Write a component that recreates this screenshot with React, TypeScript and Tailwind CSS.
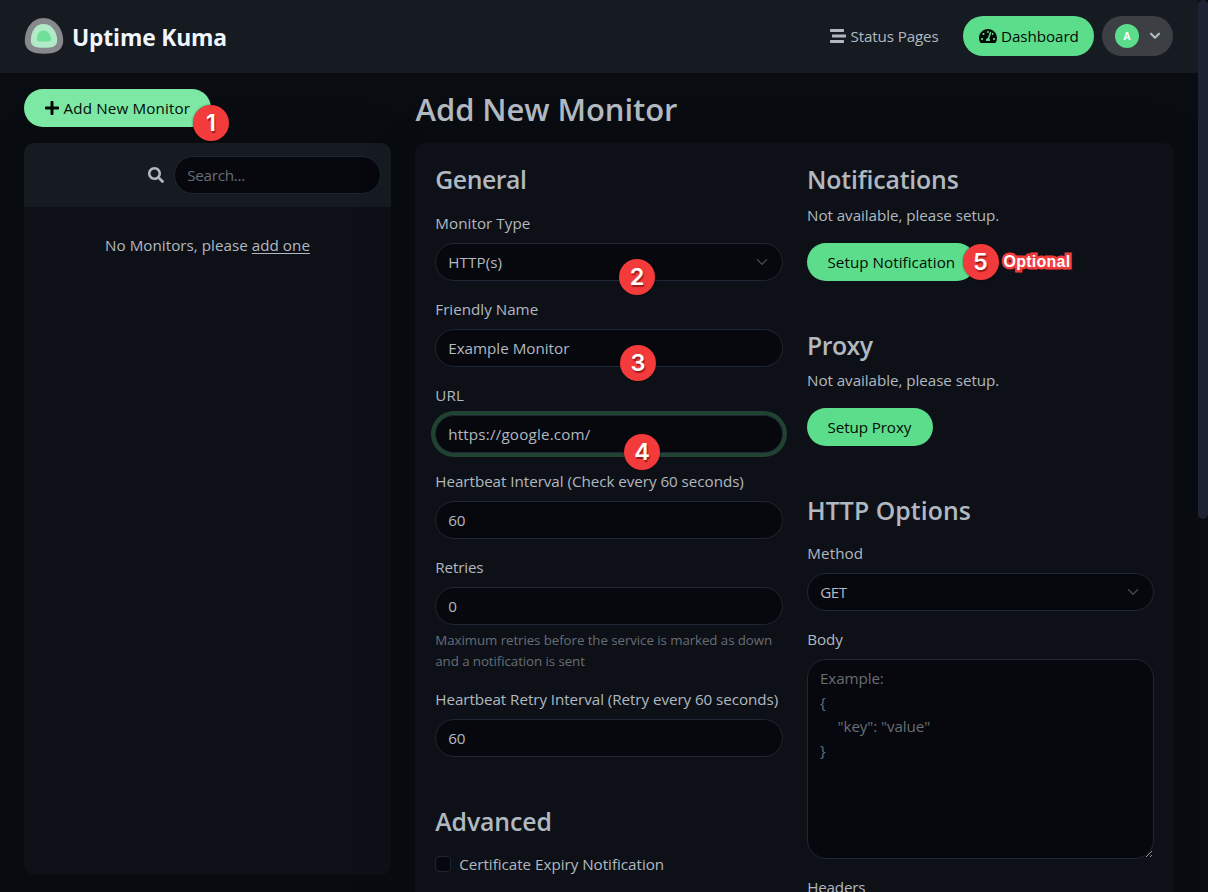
import React from "react";
import { FaPlus, FaSearch, FaStream, FaTachometerAlt } from "react-icons/fa";

const inputClass =
  "block h-[38px] w-full rounded-[19px] border border-[#1d2634] bg-[#07080d] pr-3 pl-[12.2px] text-[15.2px] text-[#b1b8c0] outline-none placeholder:text-[#676d75] placeholder:opacity-100";

function Logo() {
  return (
    <svg width="40" height="38" viewBox="0 0 40 38" className="block">
      <path d="M19.500 1C31 1 39.200 12 39.200 23.500C39.200 32.500 33 36.800 20 36.800C7 36.800 .8 32.500 .8 23.500C.8 12 8 1 19.500 1Z" fill="#86888b" />
      <path d="M19.500 7C27.500 7 33.200 14.500 33.200 23.500C33.200 29 29 30.800 20 30.800C11 30.800 6.800 29 6.800 23.500C6.800 14.500 11.500 7 19.500 7Z" fill="#b0eac6" />
      <path d="M19.500 13.500C24 13.500 26.500 17.500 27.200 22.500C27.300 24.100 26 24.500 20 24.500C14.500 24.500 12.700 24.300 12.800 22C13.300 17 15.500 13.500 19.500 13.500Z" fill="#6fe09a" />
    </svg>
  );
}

function Badge({ n, className }: { n: number; className: string }) {
  return (
    <span
      className={`absolute z-10 flex size-9 items-center justify-center rounded-full bg-[#f33b3b] font-['Inter','Liberation_Sans',sans-serif] text-[23.5px] leading-none font-semibold text-white shadow-[0_0_2px_rgba(0,0,0,0.6)] [text-shadow:1px_2px_1px_rgba(90,0,0,0.55)] ${className}`}
    >
      {n}
    </span>
  );
}

function Heading({ children, className = "" }: { children: React.ReactNode; className?: string }) {
  return <h2 className={`h-[31px] text-[24.8px] leading-[32px] font-semibold whitespace-nowrap ${className}`}>{children}</h2>;
}

function Label({ children, className = "" }: { children: React.ReactNode; className?: string }) {
  return <label className={`mb-2 block h-6 pl-[0.3px] leading-6 whitespace-nowrap ${className}`}>{children}</label>;
}

function Select({ value, className = "" }: { value: string; className?: string }) {
  return (
    <div className={`${inputClass} flex items-center justify-between`}>
      <span className={className}>{value}</span>
      <svg width="12" height="12" viewBox="0 0 16 16" fill="none" stroke="#41454c" strokeWidth="2" strokeLinecap="round" strokeLinejoin="round" className="mr-[2px] mb-px">
        <path d="m2 5 6 6 6-6" />
      </svg>
    </div>
  );
}

function Button({ children, className = "" }: { children: React.ReactNode; className?: string }) {
  return (
    <button className={`flex h-[38px] items-center rounded-[19px] bg-[#5cdd8b] pt-px whitespace-nowrap text-[#020b05] ${className}`}>
      {children}
    </button>
  );
}

export default function App() {
  return (
    <div className="relative flex h-[892px] w-[1208px] overflow-hidden bg-[#090c10] font-['Open_Sans','Noto_Sans',sans-serif] text-[15.2px] text-[#b1b8c0]">
      <div className="flex w-[1198px] flex-col">
        <header className="flex h-[73px] shrink-0 items-start bg-[#161b22]">
          <div className="mt-[17px] ml-6">
            <Logo />
          </div>
          <span className="mt-[19px] ml-2 text-[22.8px] leading-[38px] font-bold tracking-[-0.15px] text-[#f0f6fc]">Uptime Kuma</span>
          <div className="mt-4 mr-[25px] ml-auto flex h-10 items-center">
            <FaStream size={16} className="mr-[4.5px]" />
            <span className="w-[112.5px] tracking-[-0.13px]">Status Pages</span>
            <span className="flex h-10 w-[131px] items-center rounded-full bg-[#5cdd8b] pl-4 text-[#020b05]">
              <FaTachometerAlt size={18} className="mr-1" />
              <span className="tracking-[-0.07px]">Dashboard</span>
            </span>
            <span className="ml-2 flex h-10 w-[71px] items-center rounded-full bg-[#3c3f44] pl-[13px]">
              <span className="flex size-6 items-center justify-center rounded-full bg-[#5cdd8b] text-[10px] font-bold text-white">A</span>
              <svg width="12" height="8" viewBox="0 0 12 8" fill="none" stroke="#b1b8c0" strokeWidth="2.200" strokeLinecap="round" strokeLinejoin="round" className="ml-[10px]">
                <path d="M2 1.700 6 5.700 10 1.700" />
              </svg>
            </span>
          </div>
        </header>

        <div className="flex min-h-0 flex-1 pt-4 pl-6">
          <aside className="w-[367px] shrink-0">
            <div className="relative w-[187px]">
              <Button className="w-full bg-[#7ce8a4] pl-[19.5px]">
                <FaPlus size={16} className="mr-[4px] mb-px" />
                <span className="tracking-[0.14px]">Add New Monitor</span>
              </Button>
              <Badge n={1} className="top-[16px] left-[169px]" />
            </div>
            <div className="mt-4 h-[732px] overflow-hidden rounded-[10px] bg-[#0d1117] shadow-[0_15px_70px_rgba(0,0,0,0.1)]">
              <div className="flex h-16 items-center justify-end bg-[#161b22] pr-[10px]">
                <FaSearch size={16} className="mr-[10px]" />
                <input className={`${inputClass} !w-[207px] tracking-[-0.26px]`} placeholder="Search..." />
              </div>
              <p className="mt-[26px] text-center leading-6 tracking-[0.03px]">
                No Monitors, please <a className="underline underline-offset-2">add one</a>
              </p>
            </div>
          </aside>

          <main className="ml-6 w-[759px]">
            <h1 className="h-[38px] pl-[0.5px] text-[31px] leading-[40px] font-semibold tracking-[-0.08px]">Add New Monitor</h1>
            <div className="mt-4 flex h-[900px] gap-6 rounded-[10px] bg-[#0d1117] p-5 shadow-[0_15px_70px_rgba(0,0,0,0.1)]">
              <section className="w-[348px]">
                <Heading className="mb-[17px] pl-[0.3px] tracking-[-0.45px]">General</Heading>
                <div className="relative mb-4">
                  <Label className="tracking-[0.05px]">Monitor Type</Label>
                  <Select value="HTTP(s)" className="tracking-[0.1px]" />
                  <Badge n={2} className="top-[48px] left-[184px]" />
                </div>
                <div className="relative mb-4">
                  <Label>Friendly Name</Label>
                  <input className={inputClass} defaultValue="Example Monitor" />
                  <Badge n={3} className="top-[48px] left-[185px]" />
                </div>
                <div className="relative mb-4">
                  <Label className="tracking-[0.1px]">URL</Label>
                  <input className={`${inputClass} tracking-[0.18px] shadow-[0_0_0_4px_#214332]`} defaultValue="https://google.com/" />
                  <Badge n={4} className="top-[51px] left-[189px]" />
                </div>
                <div className="mb-4">
                  <Label className="tracking-[-0.04px]">Heartbeat Interval (Check every 60 seconds)</Label>
                  <input className={inputClass} defaultValue="60" />
                </div>
                <div className="mb-[15px]">
                  <Label className="tracking-[-0.15px]">Retries</Label>
                  <input className={inputClass} defaultValue="0" />
                  <p className="mt-[5px] pl-[0.3px] text-[13.3px] leading-[21px] tracking-[-0.07px] whitespace-nowrap text-[#676d75]">
                    Maximum retries before the service is marked as down
                    <br />
                    and a notification is sent
                  </p>
                </div>
                <div>
                  <Label className="tracking-[-0.06px]">Heartbeat Retry Interval (Retry every 60 seconds)</Label>
                  <input className={inputClass} defaultValue="60" />
                </div>
                <Heading className="mt-12 mb-4 pl-[0.3px] tracking-[-0.1px]">Advanced</Heading>
                <div className="flex items-center">
                  <span className="size-4 rounded-[4px] border border-[#1d2634] bg-[#07080d]" />
                  <span className="ml-[8.2px] leading-6 tracking-[-0.02px]">Certificate Expiry Notification</span>
                </div>
              </section>

              <section className="w-[347px]">
                <Heading className="mb-[9px] tracking-[-0.15px]">Notifications</Heading>
                <p className="leading-6 tracking-[-0.05px]">Not available, please setup.</p>
                <div className="relative mt-4">
                  <Button className="w-[169px] pl-[20.5px] tracking-[0.04px]">Setup Notification</Button>
                  <Badge n={5} className="top-px left-[155.5px]" />
                  <span className="absolute top-[7px] left-[196.5px] font-['Liberation_Sans',sans-serif] text-[16px] leading-[24px] font-bold tracking-[0.25px] text-white [paint-order:stroke_fill] [-webkit-text-stroke:5px_#f33b3b]">
                    Optional
                  </span>
                </div>
                <Heading className="mt-12 mb-2 tracking-[-0.5px]">Proxy</Heading>
                <p className="leading-6 tracking-[-0.05px]">Not available, please setup.</p>
                <Button className="mt-4 w-[126px] pl-[20.5px] tracking-[-0.1px]">Setup Proxy</Button>
                <Heading className="mt-12 mb-4 tracking-[0.08px]">HTTP Options</Heading>
                <Label className="tracking-[0.1px]">Method</Label>
                <Select value="GET" className="tracking-[-0.5px]" />
                <Label className="mt-4 tracking-[-0.08px]">Body</Label>
                <textarea
                  className="block h-[200px] w-full resize rounded-[19px] border border-[#1d2634] bg-[#07080d] px-3 pt-[6px] pb-2 leading-6 tracking-[-0.1px] text-[#b1b8c0] placeholder:text-[#676d75] placeholder:opacity-100"
                  placeholder={'Example:\n{\n\u2002 \u2009 "key": "value"\n}'}
                />
                <Label className="mt-4 tracking-[-0.2px]">Headers</Label>
              </section>
            </div>
          </main>
        </div>
      </div>
      <div className="w-[10px] bg-[#090c10]">
        <div className="h-[519px] rounded-[5px] bg-[#1d2332]" />
      </div>
    </div>
  );
}
